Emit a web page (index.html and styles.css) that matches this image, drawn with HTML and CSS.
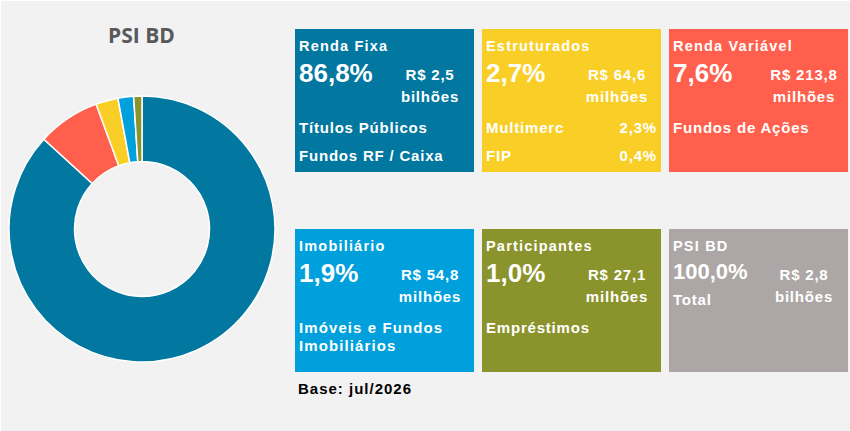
FILE: index.html
```html
<!DOCTYPE html>
<html lang="pt-BR">
<head>
<meta charset="utf-8">
<title>PSI BD</title>
<link rel="stylesheet" href="styles.css">
</head>
<body>
<div class="page">
  <section class="chart">
    <h1 class="chart-title">PSI BD</h1>
    <svg class="donut" viewBox="0 0 270 270" width="270" height="270">
      <path class="seg" fill="#02779f" d="M135,2 A133,133 0 1 1 36.89,45.21 L85.21,89.43 A67.5,67.5 0 1 0 135,67.5 Z"/>
      <path class="seg" fill="#ff5f4c" d="M36.89,45.21 A133,133 0 0 1 89.17,10.15 L111.74,71.64 A67.5,67.5 0 0 0 85.21,89.43 Z"/>
      <path class="seg" fill="#f9cf27" d="M89.17,10.15 A133,133 0 0 1 110.90,4.21 L122.77,68.62 A67.5,67.5 0 0 0 111.74,71.64 Z"/>
      <path class="seg" fill="#00a0dc" d="M110.90,4.21 A133,133 0 0 1 126.65,2.27 L130.76,67.64 A67.5,67.5 0 0 0 122.77,68.62 Z"/>
      <path class="seg" fill="#8b942c" d="M126.65,2.27 A133,133 0 0 1 135,2 L135,67.5 A67.5,67.5 0 0 0 130.76,67.64 Z"/>
    </svg>
  </section>
  <main class="panel">
    <div class="cards">
      <div class="card c-fixa">
        <div class="card-title">Renda Fixa</div>
        <div class="card-main">
          <div class="pct">86,8%</div>
          <div class="amount">R$ 2,5<br>bilhões</div>
        </div>
        <div class="item">Títulos Públicos</div>
        <div class="item">Fundos RF / Caixa</div>
      </div>
      <div class="card c-estr">
        <div class="card-title">Estruturados</div>
        <div class="card-main">
          <div class="pct">2,7%</div>
          <div class="amount">R$ 64,6<br>milhões</div>
        </div>
        <div class="item split"><span>Multimerc</span><span>2,3%</span></div>
        <div class="item split"><span>FIP</span><span>0,4%</span></div>
      </div>
      <div class="card c-var">
        <div class="card-title">Renda Variável</div>
        <div class="card-main">
          <div class="pct">7,6%</div>
          <div class="amount">R$ 213,8<br>milhões</div>
        </div>
        <div class="item">Fundos de Ações</div>
      </div>
      <div class="card c-imob">
        <div class="card-title">Imobiliário</div>
        <div class="card-main">
          <div class="pct">1,9%</div>
          <div class="amount">R$ 54,8<br>milhões</div>
        </div>
        <div class="item wide">Imóveis e Fundos<br>Imobiliários</div>
      </div>
      <div class="card c-part">
        <div class="card-title">Participantes</div>
        <div class="card-main">
          <div class="pct">1,0%</div>
          <div class="amount">R$ 27,1<br>milhões</div>
        </div>
        <div class="item">Empréstimos</div>
      </div>
      <div class="card c-total">
        <div class="card-title">PSI BD</div>
        <div class="card-main">
          <div class="left">
            <div class="pct small">100,0%</div>
            <div class="sub">Total</div>
          </div>
          <div class="amount">R$ 2,8<br>bilhões</div>
        </div>
      </div>
    </div>
    <div class="base">Base: jul/2026</div>
  </main>
</div>
</body>
</html>
```
FILE: styles.css
```css
html, body {
  margin: 0;
  padding: 0;
}

body {
  background: #f2f2f2;
  font-family: "Liberation Sans", Arial, sans-serif;
}

.page {
  display: flex;
  width: 850px;
  height: 431px;
  box-sizing: border-box;
  border-top: 1px solid #ffffff;
  border-left: 1px solid #ffffff;
}

.chart {
  flex: none;
  width: 281px;
  display: flex;
  flex-direction: column;
  align-items: center;
}

.chart-title {
  margin: 20px 0 0;
  font-family: "Open Sans", "Liberation Sans", sans-serif;
  font-weight: 700;
  font-size: 21px;
  line-height: 28px;
  color: #595959;
}

.donut {
  display: block;
  margin-top: 45px;
}

.seg {
  stroke: #ffffff;
  stroke-width: 1.5;
  stroke-linejoin: round;
}

.panel {
  margin-left: 13px;
  padding-top: 28px;
}

.cards {
  display: grid;
  grid-template-columns: repeat(3, 179px);
  grid-auto-rows: 143px;
  column-gap: 8px;
  row-gap: 57px;
}

.card {
  box-sizing: border-box;
  padding: 7.5px 4px 0;
  color: #ffffff;
  font-weight: 700;
}

.c-fixa { background: #02779f; }
.c-estr { background: #f9cf27; }
.c-var { background: #ff5f4c; }
.c-imob { background: #00a0dc; }
.c-part { background: #8b942c; }
.c-total { background: #aca7a6; }

.card-title {
  font-size: 14.5px;
  line-height: 18px;
  letter-spacing: 1.2px;
  white-space: nowrap;
}

.card-main {
  display: grid;
  grid-template-columns: 91px 1fr;
  align-items: start;
  margin: 3.5px 0 6.5px;
}

.pct {
  font-size: 26px;
  line-height: 30px;
  white-space: nowrap;
}

.pct.small {
  font-size: 22px;
  line-height: 26px;
  padding-top: 1.4px;
}

.sub {
  margin-top: 4px;
  font-size: 15px;
  line-height: 22px;
  letter-spacing: 0.8px;
}

.amount {
  padding-top: 5.8px;
  font-size: 15px;
  line-height: 22px;
  letter-spacing: 0.8px;
  text-align: center;
  white-space: nowrap;
}

.item {
  padding: 5px 0;
  font-size: 15px;
  line-height: 18px;
  letter-spacing: 0.8px;
  white-space: nowrap;
}

.item.wide {
  letter-spacing: 1.1px;
}

.item.split {
  display: flex;
  justify-content: space-between;
}

.base {
  margin: 7.8px 0 0 3px;
  font-size: 15px;
  font-weight: 700;
  line-height: 18px;
  letter-spacing: 1px;
  color: #000000;
}
```
